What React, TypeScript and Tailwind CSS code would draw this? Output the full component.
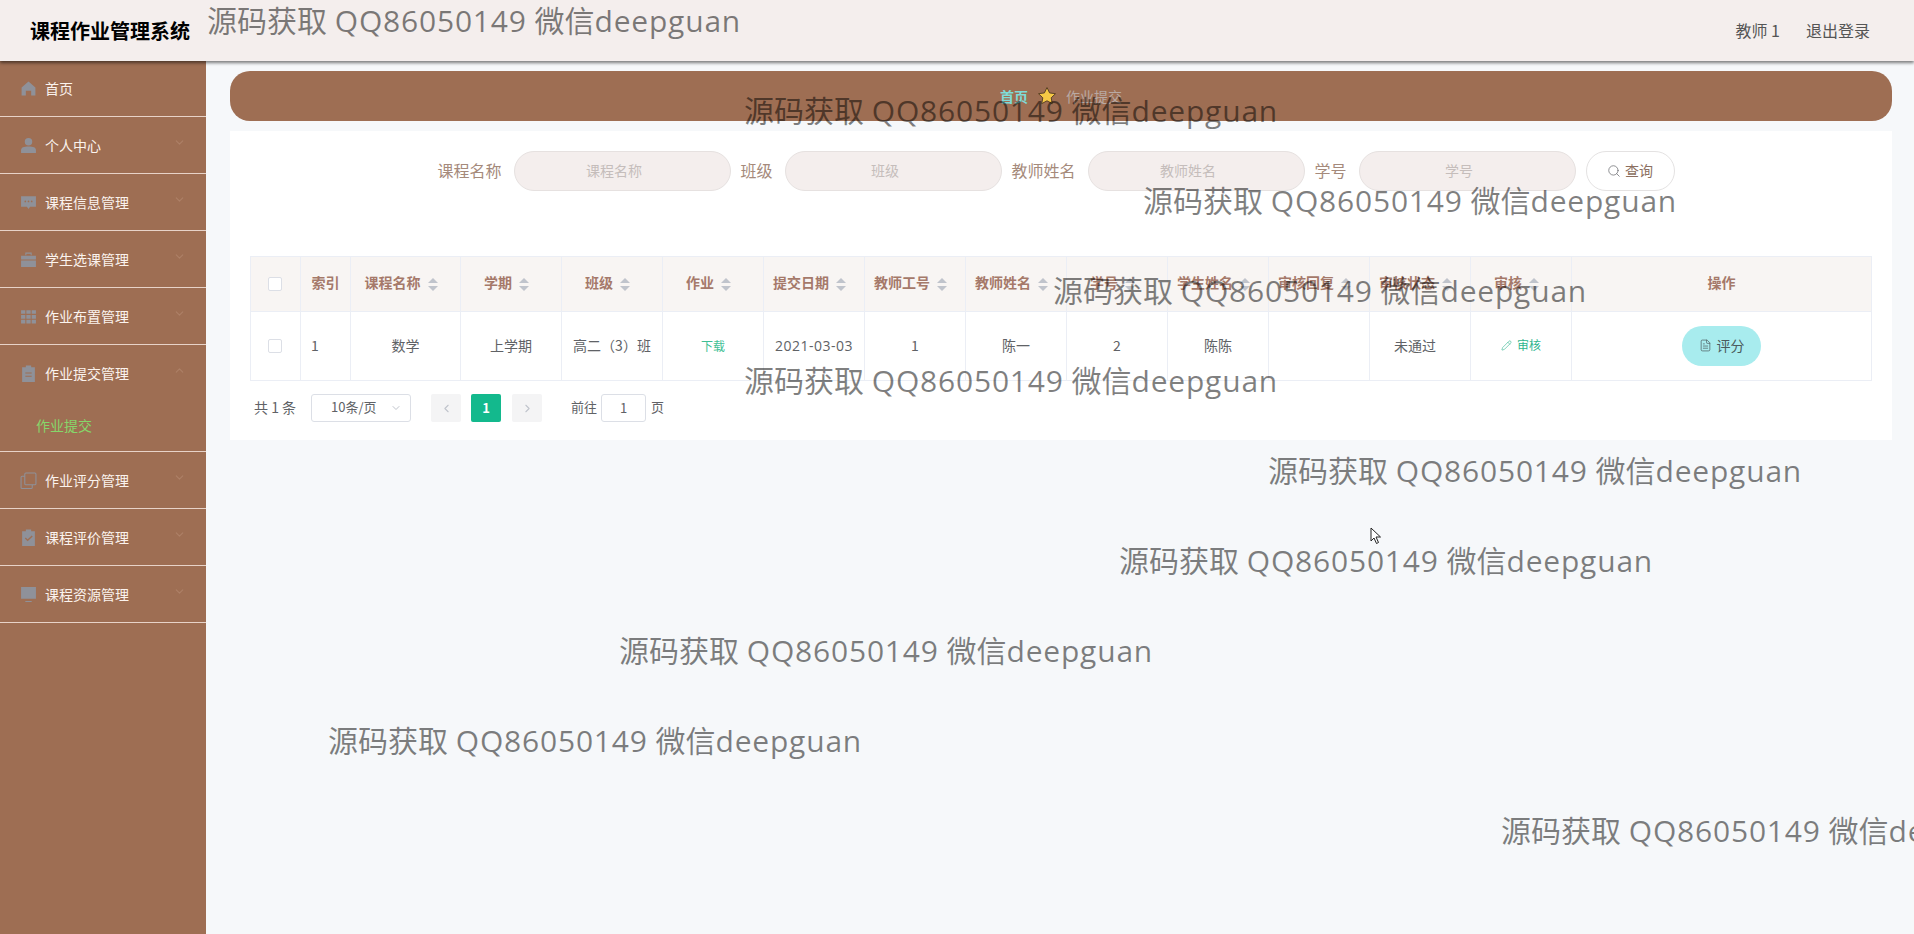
import { ChevronDown, ChevronUp, ChevronLeft, ChevronRight, Search, Pencil, FileText } from 'lucide-react'
import type { ReactNode } from 'react'

const iconCls = 'w-[17px] h-[17px] text-[#8f9199] shrink-0'

const HomeIcon = () => (
    <svg viewBox="0 0 16 16" className={iconCls} fill="currentColor"><path d="M8 1.500 1.500 7v7.500h4V10h5v4.500h4V7z" /></svg>
)
const UserIcon = () => (
    <svg viewBox="0 0 16 16" className={iconCls} fill="currentColor"><circle cx="8" cy="4.500" r="3.500" /><path d="M1 15v-2.500C1 10 3.500 9 8 9s7 1 7 3.500V15z" /></svg>
)
const ChatIcon = () => (
    <svg viewBox="0 0 16 16" className={iconCls} fill="currentColor"><path d="M1 2h14v10H9.500L8 14l-1.500-2H1z" /><circle cx="5" cy="7" r=".8" fill="#9e6e53" /><circle cx="8" cy="7" r=".8" fill="#9e6e53" /><circle cx="11" cy="7" r=".8" fill="#9e6e53" /></svg>
)
const BagIcon = () => (
    <svg viewBox="0 0 16 16" className={iconCls} fill="currentColor"><path d="M5 4V1.500h6V4h-1V2.500H6V4z" /><path d="M1 4.500h14V8H1zM1 9h14v6H1z" /></svg>
)
const GridIcon = () => (
    <svg viewBox="0 0 16 16" className={iconCls} fill="currentColor"><path d="M1 2h4v3.500H1zM6 2h4v3.500H6zM11 2h4v3.500h-4zM1 6.500h4V10H1zM6 6.500h4V10H6zM11 6.500h4V10h-4zM1 11h4v3.500H1zM6 11h4v3.500H6zM11 11h4v3.500h-4z" /></svg>
)
const ClipIcon = () => (
    <svg viewBox="0 0 16 16" className={iconCls} fill="currentColor"><path d="M5.500 0.500h5V2H14v14H2V2h3.500z" /><path d="M5 7h6v1H5zM5 10h6v1H5z" fill="#9e6e53" /></svg>
)
const CopyIcon = () => (
    <svg viewBox="0 0 16 16" className={iconCls} fill="none" stroke="currentColor" strokeWidth="1"><rect x="4.500" y="1" width="10.500" height="11" rx="1" /><path d="M4.500 4H2a1 1 0 0 0-1 1v9.500a1 1 0 0 0 1 1h8.500a1 1 0 0 0 1-1V12" /></svg>
)
const CheckClipIcon = () => (
    <svg viewBox="0 0 16 16" className={iconCls} fill="currentColor"><path d="M5.500 0.500h5V2H14v14H2V2h3.500z" /><path d="m5 8.500 2.200 2.200L11.500 6.500" fill="none" stroke="#9e6e53" strokeWidth="1.300" /></svg>
)
const ScreenIcon = () => (
    <svg viewBox="0 0 16 16" className={iconCls} fill="currentColor"><path d="M1 1h14v11H1zM5 14h6v1H5z" /></svg>
)

type MenuItem = { label: string; icon: ReactNode; arrow?: 'down' | 'up'; sub?: string }

const menu: MenuItem[] = [
    { label: '首页', icon: <HomeIcon /> },
    { label: '个人中心', icon: <UserIcon />, arrow: 'down' },
    { label: '课程信息管理', icon: <ChatIcon />, arrow: 'down' },
    { label: '学生选课管理', icon: <BagIcon />, arrow: 'down' },
    { label: '作业布置管理', icon: <GridIcon />, arrow: 'down' },
    { label: '作业提交管理', icon: <ClipIcon />, arrow: 'up', sub: '作业提交' },
    { label: '作业评分管理', icon: <CopyIcon />, arrow: 'down' },
    { label: '课程评价管理', icon: <CheckClipIcon />, arrow: 'down' },
    { label: '课程资源管理', icon: <ScreenIcon />, arrow: 'down' },
]

const columns = [
    { label: '课程名称', width: 'w-[110px]', value: '数学' },
    { label: '学期', width: 'w-[101px]', value: '上学期' },
    { label: '班级', width: 'w-[101px]', value: '高二（3）班' },
    { label: '作业', width: 'w-[101px]', value: '下载' },
    { label: '提交日期', width: 'w-[101px]', value: '2021-03-03' },
    { label: '教师工号', width: 'w-[101px]', value: '1' },
    { label: '教师姓名', width: 'w-[101px]', value: '陈一' },
    { label: '学号', width: 'w-[101px]', value: '2' },
    { label: '学生姓名', width: 'w-[101px]', value: '陈陈' },
    { label: '审核回复', width: 'w-[101px]', value: '' },
    { label: '审核状态', width: 'w-[101px]', value: '未通过' },
    { label: '审核', width: 'w-[101px]', value: '审核' },
]

const watermarks = [
    'left-[207px] top-[1px]',
    'left-[744px] top-[91px]',
    'left-[1143px] top-[181px]',
    'left-[1053px] top-[271px]',
    'left-[744px] top-[361px]',
    'left-[1268px] top-[451px]',
    'left-[1119px] top-[541px]',
    'left-[619px] top-[631px]',
    'left-[328px] top-[721px]',
    'left-[1501px] top-[811px]',
]

const filters = [
    { label: '课程名称', width: 'w-[64px]' },
    { label: '班级', width: 'w-[32px]' },
    { label: '教师姓名', width: 'w-[64px]' },
    { label: '学号', width: 'w-[32px]' },
]

function SortCaret() {
    return (
        <span className="inline-flex flex-col gap-[3px] ml-[7px] mr-[9px] align-middle">
            <span className="w-0 h-0 border-x-[5px] border-x-transparent border-b-[5px] border-b-[#c0c4cc]"></span>
            <span className="w-0 h-0 border-x-[5px] border-x-transparent border-t-[5px] border-t-[#c0c4cc]"></span>
        </span>
    )
}

function Checkbox({ className }: { className: string }) {
    return <span className={`block w-[14px] h-[14px] border border-[#dcdfe6] rounded-[2px] bg-white ${className}`}></span>
}

function Sidebar() {
    return (
        <aside className="w-[206px] shrink-0 bg-[#9e6e53]">
            {menu.map((item, i) => (
                <div key={item.label} className="border-b border-[#e8d3c8]">
                    <div className={`${i === 0 ? 'h-[55px]' : 'h-[56px]'} flex items-center pl-[20px] pr-[20px] text-[14px] text-[#fbf3ee]`}>
                        {item.icon}
                        <span className="ml-[8px] flex-1">{item.label}</span>
                        {item.arrow === 'down' && <ChevronDown className="w-[13px] h-[13px] text-[#ad8067] -translate-y-[3px]" />}
                        {item.arrow === 'up' && <ChevronUp className="w-[13px] h-[13px] text-[#ad8067] -translate-y-[3px]" />}
                    </div>
                    {item.sub && <div className="h-[50px] pl-[36px] pb-[2px] flex items-center text-[14px] text-[#86d66a]">{item.sub}</div>}
                </div>
            ))}
        </aside>
    )
}

function SearchBar() {
    return (
        <div className="flex items-center justify-center pr-[10px] text-[16px] text-[#a58a7b]">
            {filters.map((f) => (
                <div key={f.label} className="flex items-center mr-[10px]">
                    <span className={`${f.width} mr-[12px] pb-[2px]`}>{f.label}</span>
                    <div className="w-[217px] h-[40px] rounded-[20px] bg-[#f4eeed] border border-[#e6e1e0] flex items-center justify-center pr-[16px] pb-[2px] text-[14px] text-[#c5bdbb]">
                        {f.label}
                    </div>
                </div>
            ))}
            <button className="w-[89px] h-[40px] rounded-[20px] bg-white border border-[#e4e2e2] flex items-center justify-center gap-[4px] pb-[1px] text-[14px] text-[#8c6f60]">
                <Search className="w-[14px] h-[14px] text-[#606266]" strokeWidth={1.200} />
                查询
            </button>
        </div>
    )
}

function DataTable() {
    return (
        <table className="mt-[65px] w-[1622px] table-fixed border-collapse text-[14px] border border-[#ebeef5]">
            <thead>
                <tr className="h-[55px] bg-[#f8f5f3] text-[#a5796a] font-bold">
                    <th className="w-[50px] border border-[#ebeef5]"><Checkbox className="mx-auto -translate-x-[1px]" /></th>
                    <th className="w-[50px] border border-[#ebeef5] font-bold pb-[3px]">索引</th>
                    {columns.map((c) => (
                        <th key={c.label} className={`${c.width} border border-[#ebeef5] font-bold whitespace-nowrap pb-[3px]`}>
                            {c.label}
                            <SortCaret />
                        </th>
                    ))}
                    <th className="border border-[#ebeef5] font-bold pb-[3px]">操作</th>
                </tr>
            </thead>
            <tbody>
                <tr className="h-[69px] text-[#606266] text-center">
                    <td className="border border-[#ebeef5]"><Checkbox className="mx-auto -translate-x-[1px]" /></td>
                    <td className="border border-[#ebeef5] text-left pl-[10px] pb-[2px]">1</td>
                    {columns.map((c) => (
                        <td key={c.label} className="border border-[#ebeef5] whitespace-nowrap pb-[2px]">
                            {c.label === '作业' && <span className="text-[12px] text-[#3fbf95]">{c.value}</span>}
                            {c.label === '审核' && (
                                <span className="inline-flex items-center gap-[5px] text-[12px] text-[#2fb58e]">
                                    <Pencil className="w-[11px] h-[11px]" strokeWidth={1.300} />
                                    {c.value}
                                </span>
                            )}
                            {c.label === '提交日期' && <span className="font-['Open_Sans','Noto_Sans',sans-serif] tracking-[0.5px]">{c.value}</span>}
                            {c.label === '审核状态' && <span className="pr-[10px]">{c.value}</span>}
                            {c.label !== '作业' && c.label !== '审核' && c.label !== '提交日期' && c.label !== '审核状态' && c.value}
                        </td>
                    ))}
                    <td className="border border-[#ebeef5]">
                        <button className="w-[79px] h-[40px] rounded-[20px] bg-[#a8ecee] inline-flex items-center justify-center gap-[5px] pb-[1px] text-[14px] text-[#4b5a5c]">
                            <FileText className="w-[13px] h-[13px]" strokeWidth={1.300} />
                            评分
                        </button>
                    </td>
                </tr>
            </tbody>
        </table>
    )
}

function Pagination() {
    return (
        <div className="mt-[13px] h-[28px] flex items-center pl-[4px] text-[13px] text-[#606266]">
            <span className="w-[43px] whitespace-nowrap text-[14px] pb-[2px]">共 1 条</span>
            <div className="ml-[14px] w-[100px] h-[28px] border border-[#dcdfe6] rounded-[3px] flex items-center pl-[19px] pr-[8px]">
                <span className="flex-1 pb-[2px]">10条/页</span>
                <ChevronDown className="w-[12px] h-[12px] text-[#c0c4cc]" />
            </div>
            <div className="ml-[20px] w-[30px] h-[28px] bg-[#f4f4f5] rounded-[2px] flex items-center justify-center">
                <ChevronLeft className="w-[13px] h-[13px] text-[#c0c4cc]" />
            </div>
            <div className="ml-[10px] w-[30px] h-[28px] bg-[#13b98d] rounded-[2px] flex items-center justify-center text-white font-bold">1</div>
            <div className="ml-[11px] w-[30px] h-[28px] bg-[#f4f4f5] rounded-[2px] flex items-center justify-center">
                <ChevronRight className="w-[13px] h-[13px] text-[#c0c4cc]" />
            </div>
            <span className="ml-[29px] pb-[2px]">前往</span>
            <div className="ml-[4px] w-[45px] h-[28px] border border-[#dcdfe6] rounded-[3px] flex items-center justify-center pb-[1px]">1</div>
            <span className="ml-[5px] pb-[2px]">页</span>
        </div>
    )
}

export default function App() {
    return (
        <div className="relative w-[1914px] h-[934px] overflow-hidden bg-[#f6f8fa] font-['Noto_Sans_CJK_SC','Noto_Sans',sans-serif] flex flex-col">
            <header className="relative z-10 h-[61px] shrink-0 bg-[#f4eeed] shadow-[0_2px_3px_rgba(0,0,0,0.5)] flex items-center pl-[30px] pr-[44px]">
                <h1 className="text-[20px] font-bold text-black flex-1">课程作业管理系统</h1>
                <span className="text-[16px] text-[#555] pb-[1px]">教师&nbsp;1</span>
                <span className="ml-[26px] text-[16px] text-[#555] pb-[1px]">退出登录</span>
            </header>
            <div className="flex flex-1">
                <Sidebar />
                <main className="flex-1 pt-[10px] pl-[24px] pr-[22px]">
                    <div className="h-[50px] rounded-[20px] bg-[#9e6e53] flex items-center justify-center text-[14px]">
                        <span className="font-bold text-[#7fdcd8]">首页</span>
                        <svg viewBox="0 0 20 20" className="mx-[9px] w-[20px] h-[20px]"><path d="m10 1.500 2.600 5.400 5.900.8-4.300 4.100 1.100 5.900L10 14.800l-5.300 2.900 1.100-5.900L1.500 7.700l5.900-.8z" fill="#f6c945" stroke="#5b4226" strokeWidth="1" /></svg>
                        <span className="text-[#b9a9a3]">作业提交</span>
                    </div>
                    <div className="mt-[10px] h-[309px] bg-white px-[20px] pt-[20px]">
                        <SearchBar />
                        <DataTable />
                        <Pagination />
                    </div>
                </main>
            </div>
            {watermarks.map((pos) => (
                <div key={pos} className={`absolute ${pos} z-20 text-[30px] leading-[40px] text-black/50 whitespace-nowrap pointer-events-none font-['Open_Sans','Noto_Sans_CJK_SC',sans-serif]`}>
                    源码获取 <span className="tracking-[0.8px]">QQ86050149</span> 微信<span className="tracking-[0.8px]">deepguan</span>
                </div>
            ))}
            {/* mouse cursor */}
            <svg viewBox="0 0 12 18" className="absolute z-30 left-[1370px] top-[527px] w-[12px] h-[18px]">
                <path d="M1 1v13l3-3 2.500 5.500 2-1L6 10h4.500z" fill="#fff" stroke="#222" strokeWidth="1" />
            </svg>
        </div>
    )
}
